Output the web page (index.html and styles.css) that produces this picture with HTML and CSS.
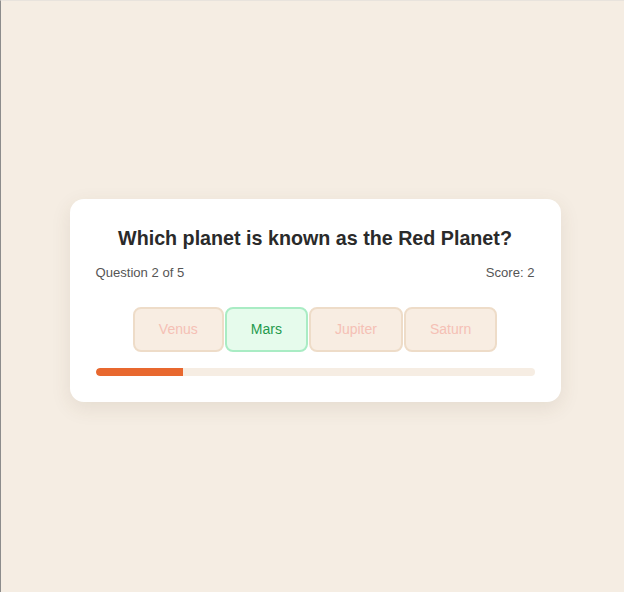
FILE: index.html
```html
<!DOCTYPE html>
<html lang="en">
<head>
<meta charset="utf-8">
<title>Planet Quiz</title>
<link rel="stylesheet" href="styles.css">
</head>
<body>
<div class="page">
  <div class="card">
    <h1 class="question">Which planet is known as the Red Planet?</h1>
    <div class="meta">
      <span>Question 2 of 5</span>
      <span>Score: 2</span>
    </div>
    <div class="options">
      <button class="option disabled">Venus</button>
      <button class="option correct">Mars</button>
      <button class="option disabled">Jupiter</button>
      <button class="option disabled">Saturn</button>
    </div>
    <div class="progress"><div class="progress-fill" style="width: 20%"></div></div>
  </div>
</div>
</body>
</html>
```

FILE: styles.css
```css
html, body {
  margin: 0;
  padding: 0;
  background: #f5ede3;
}

body {
  font-family: "Liberation Sans", Arial, sans-serif;
}

.page {
  box-sizing: border-box;
  min-height: 592px;
  border-left: 1px solid #8c8c8c;
  border-top: 1px solid #e8e3dd;
  padding: 8px 0 0 5px;
  display: flex;
  align-items: center;
  justify-content: center;
}

.card {
  box-sizing: border-box;
  width: 491px;
  background: #ffffff;
  border-radius: 14px;
  padding: 28px 26px 26px;
  box-shadow: 0 6px 20px rgba(90, 70, 40, 0.10);
}

.question {
  margin: 0;
  font-size: 19.7px;
  line-height: 23px;
  font-weight: bold;
  color: #2a2a2a;
  text-align: center;
}

.meta {
  margin-top: 15px;
  display: flex;
  justify-content: space-between;
  font-size: 13.1px;
  line-height: 15px;
  color: #555555;
}

.options {
  margin-top: 27px;
  display: flex;
  justify-content: center;
  gap: 1px;
}

.option {
  font-family: "Liberation Sans", Arial, sans-serif;
  font-size: 14px;
  line-height: 17px;
  padding: 12px 24px;
  border-radius: 8px;
  border: 2px solid #eedcc8;
  background: #f8ede2;
  color: #f5c0b5;
  cursor: default;
}

.option.correct {
  background: #e6fbec;
  border-color: #a9ecc4;
  color: #1f9a4d;
}

.progress {
  margin-top: 16px;
  height: 8px;
  border-radius: 4px;
  background: #f6ede3;
  overflow: hidden;
}

.progress-fill {
  height: 100%;
  background: #e8682f;
  border-radius: 4px 0 0 4px;
}
```
